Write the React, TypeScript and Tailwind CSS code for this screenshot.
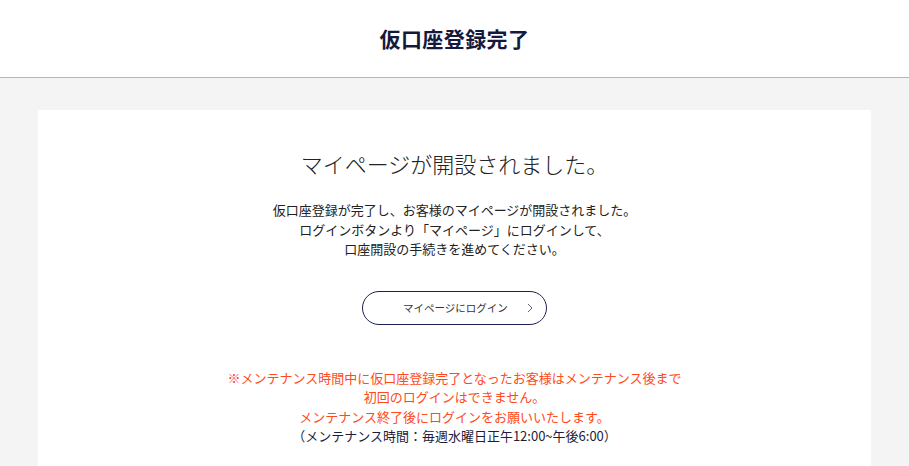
export default function App() {
  return (
    <div
      className="min-h-screen bg-[#f4f4f4] text-[#1d1d3b]"
      style={{ fontFamily: '"Noto Sans CJK JP", "Noto Sans", sans-serif' }}
    >
      <header className="h-[78px] bg-white border-b border-[#b5b5b5] flex items-center justify-center">
        <h1 className="text-[21px] font-bold tracking-[0.02em] text-[#151a3c]">仮口座登録完了</h1>
      </header>

      <main className="px-[38px] pt-[32px]">
        <div className="bg-white pt-[38px] pb-[30px] flex flex-col items-center text-center">
          <h2 className="text-[22px] leading-[30px] font-light text-[#222]">マイページが開設されました。</h2>

          <p className="mt-[22px] text-[13px] leading-[19.5px] text-[#222]">
            仮口座登録が完了し、お客様のマイページが開設されました。
            <br />
            ログインボタンより「マイページ」にログインして、
            <br />
            口座開設の手続きを進めてください。
          </p>

          <button className="mt-[32px] w-[185px] h-[34px] rounded-full border border-[#1d2150] flex items-center pl-[40px] pr-[12px] text-[10.5px] text-[#333] bg-white">
            <span className="flex-1 text-left">マイページにログイン</span>
            <svg width="8" height="10" viewBox="0 0 8 10" fill="none" stroke="#666" strokeWidth="1">
              <path d="M2 1l4 4-4 4" />
            </svg>
          </button>

          <div className="mt-[43px] text-[13px] leading-[19.5px]">
            <p className="text-[#ff4a1c]">
              ※メンテナンス時間中に仮口座登録完了となったお客様はメンテナンス後まで
              <br />
              初回のログインはできません。
              <br />
              メンテナンス終了後にログインをお願いいたします。
            </p>
            <p className="text-[#1d1d3b]">（メンテナンス時間：毎週水曜日正午12:00~午後6:00）</p>
          </div>
        </div>
      </main>
    </div>
  );
}
